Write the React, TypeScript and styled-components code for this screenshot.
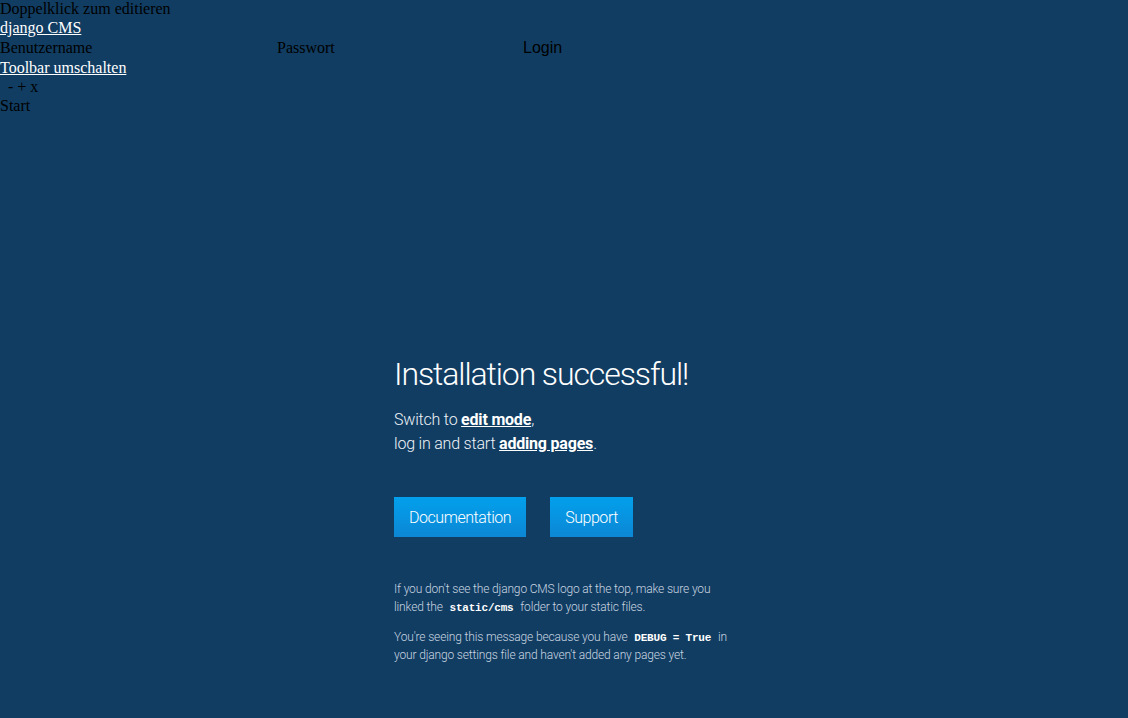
import styled, { createGlobalStyle } from 'styled-components';

const GlobalStyle = createGlobalStyle`
  html, body {
    margin: 0;
    padding: 0;
    background: #113d62;
    min-height: 100%;
  }
  body {
    font-family: "Liberation Serif", "Times New Roman", serif;
    font-size: 16px;
    color: #000;
  }
`;

// Unstyled toolbar leftovers (CSS not loaded)
const Toolbar = styled.div`
  line-height: 19px;
  margin-top: -1px;
`;

const Line = styled.div`
  white-space: nowrap;
`;

const PlainLink = styled.a`
  color: #fff;
  text-decoration: underline;
`;

const LoginRow = styled.div`
  display: flex;
  align-items: center;
  height: 21px;
`;

const Field = styled.span<{ $width: number }>`
  display: inline-block;
  width: ${(p) => p.$width}px;
`;

const LoginButton = styled.span`
  font-family: "Liberation Sans", Arial, sans-serif;
  font-size: 16px;
`;

const Controls = styled.div`
  padding-left: 8px;
`;

// Welcome block
const Main = styled.main`
  width: 340px;
  margin: 240px auto 0;
  font-family: Roboto, "Liberation Sans", Arial, sans-serif;
  font-weight: 300;
  color: #eef3f8;
`;

const Title = styled.h1`
  font-size: 32px;
  font-weight: 300;
  letter-spacing: -1.1px;
  margin: 0 0 15px;
  color: #fff;
  white-space: nowrap;
`;

const Lead = styled.p`
  font-size: 16px;
  line-height: 24px;
  letter-spacing: -0.2px;
  margin: 0;
`;

const Strong = styled.a`
  color: #fff;
  font-weight: 700;
  text-decoration: underline;
`;

const Buttons = styled.div`
  display: flex;
  gap: 24px;
  margin-top: 41px;
`;

const Button = styled.a`
  display: inline-flex;
  align-items: center;
  height: 40px;
  padding: 0 15px;
  font-size: 16px;
  letter-spacing: -0.45px;
  color: #fff;
  text-decoration: none;
  background: linear-gradient(#02a0ec, #0c87d5);
`;

const Notes = styled.div`
  margin-top: 43px;
  font-size: 12px;
  line-height: 18px;
  letter-spacing: -0.15px;
  color: #c9d5e1;
`;

const Note = styled.p`
  margin: 0 0 12px;
`;

const Code = styled.code`
  font-family: "Liberation Mono", "Courier New", monospace;
  font-weight: 700;
  font-size: 11px;
  line-height: 1;
  letter-spacing: -0.2px;
  color: #fff;
  margin: 0 4px;
`;

export default function App() {
  return (
    <>
      <GlobalStyle />
      <Toolbar>
        <Line>Doppelklick zum editieren</Line>
        <Line>
          <PlainLink href="#">django CMS</PlainLink>
        </Line>
        <LoginRow>
          <Field $width={277}>Benutzername</Field>
          <Field $width={246}>Passwort</Field>
          <LoginButton>Login</LoginButton>
        </LoginRow>
        <Line>
          <PlainLink href="#">Toolbar umschalten</PlainLink>
        </Line>
        <Controls>- + x</Controls>
        <Line>Start</Line>
      </Toolbar>
      <Main>
        <Title>Installation successful!</Title>
        <Lead>
          Switch to <Strong href="#">edit mode</Strong>,
          <br />
          log in and start <Strong href="#">adding pages</Strong>.
        </Lead>
        <Buttons>
          <Button href="#">Documentation</Button>
          <Button href="#">Support</Button>
        </Buttons>
        <Notes>
          <Note>
            If you don't see the django CMS logo at the top, make sure you linked the{' '}
            <Code>static/cms</Code> folder to your static files.
          </Note>
          <Note>
            You're seeing this message because you have <Code>DEBUG = True</Code> in your
            django settings file and haven't added any pages yet.
          </Note>
        </Notes>
      </Main>
    </>
  );
}
